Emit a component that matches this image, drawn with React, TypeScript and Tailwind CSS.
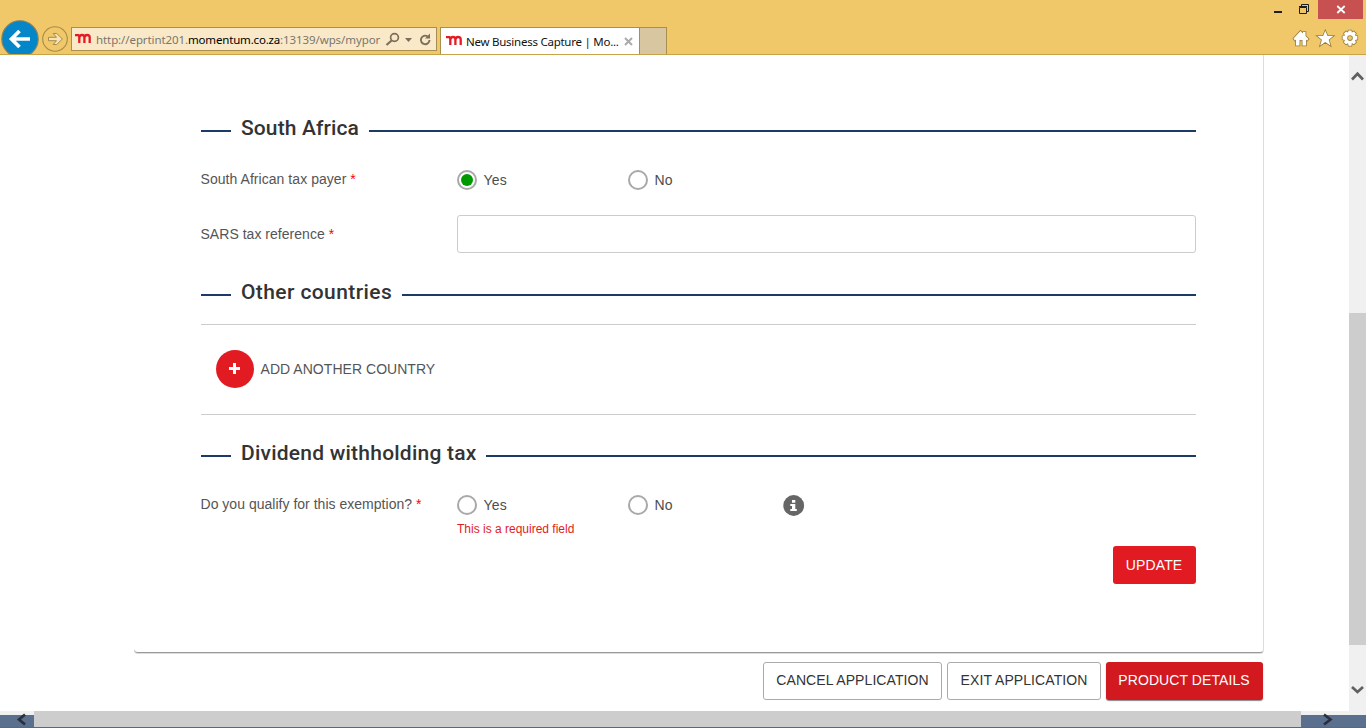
import React from "react";

function Favicon({ className }: { className: string }) {
  return (
    <svg className={className} width="17" height="12" viewBox="0 0 17 12" fill="none" stroke="#e31b23" strokeWidth="2.3">
      <path d="M0 2.2H3.4L4.300 3.400V10" />
      <path d="M4.300 4.200Q4.800 2 7 2Q9.400 2 9.400 4.500V10M9.400 4.500Q9.900 2 12 2Q14.700 2 14.700 4.500V10" />
    </svg>
  );
}

function Heading({ title, box }: { title: string; box: string }) {
  return (
    <div className="flex h-[30px] items-center">
      <div className="h-[2px] w-[30px] shrink-0 bg-[#1b3a66]" />
      <h2 className={`relative -top-[3px] shrink-0 whitespace-nowrap pl-[10px] font-['Roboto','Liberation_Sans',sans-serif] text-[21px] leading-[30px] font-medium text-[#333] ${box}`}>
        {title}
      </h2>
      <div className="h-[2px] grow bg-[#1b3a66]" />
    </div>
  );
}

function Radio({ label, checked, box }: { label: string; checked?: boolean; box: string }) {
  return (
    <div className={`flex items-center ${box}`}>
      <div className="flex size-[20px] shrink-0 items-center justify-center rounded-full border-2 border-[#a9a9a9] bg-white">
        {checked && <div className="size-[12px] rounded-full bg-[#090]" />}
      </div>
      <span className="pl-[6.500px] text-[14px] leading-[20px] tracking-[0.2px] text-[#4d4d4d]">{label}</span>
    </div>
  );
}

function Label({ text, box }: { text: string; box: string }) {
  return (
    <div className={`w-[256px] shrink-0 whitespace-nowrap text-[14px] leading-[20px] text-[#555] ${box}`}>
      {text} <span className="text-[#f00]">*</span>
    </div>
  );
}

function BrowserBar() {
  return (
    <header className="flex h-[55px] shrink-0 flex-col border-b border-[#c9a349] bg-[#f0c869] font-['Noto_Sans','Open_Sans',sans-serif]">
      <div className="flex h-[19px] justify-end">
        <svg width="48" height="19" viewBox="0 0 48 19" fill="none" stroke="#1e1e1e">
          <path d="M4 12H12" strokeWidth="2" />
          <path d="M29.500 7.500H36.500V13.500H29.500ZM29 6.500H37M31.500 6V4.500H38.500V11.500H37" />
        </svg>
        <div className="flex h-[19px] w-[45px] items-center justify-center bg-[#c75050]">
          <svg width="10" height="9" viewBox="0 0 10 9" fill="none" stroke="#fff" strokeWidth="1.800">
            <path d="M1.300 1L8.700 8M8.700 1L1.300 8" />
          </svg>
        </div>
        <div className="w-[3px]" />
      </div>
      <div className="flex h-[35px]">
        <svg className="shrink-0" width="71" height="35" viewBox="0 0 71 35" fill="none">
          <circle cx="20" cy="20" r="18.200" fill="#0586c8" stroke="#8a8058" strokeWidth="1.100" />
          <path d="M30 20H12.500M19.500 12L11.500 20L19.500 28" stroke="#fff" strokeWidth="3.700" />
          <circle cx="55" cy="20" r="12.300" stroke="#a58b4b" strokeWidth="1.100" />
          <path d="M48.500 18.300H56.500L53.200 14.500H56.800L62.300 20L56.800 25.500H53.200L56.500 21.700H48.500Z" fill="#f8e4b3" stroke="#a58b4b" />
        </svg>
        <div className="mt-[8px] flex h-[24px] w-[366px] shrink-0 border border-[#a78f50] bg-[#f9e9c8]">
          <Favicon className="mt-[5px] ml-[3px] shrink-0" />
          <div className="ml-[4px] w-[287px] whitespace-nowrap text-[11.500px] leading-[24px] tracking-[-0.09px] text-[#7b766c]">
            http://eprtint201.<span className="tracking-[-0.18px] text-black">momentum.co.za</span>:13139/wps/mypor
          </div>
          <svg className="ml-[1px] shrink-0" width="50" height="22" viewBox="0 0 50 22" fill="none" stroke="#7b6f59">
            <circle cx="10.500" cy="9.500" r="3.900" strokeWidth="1.700" />
            <path d="M7.600 12.500L2.500 17" strokeWidth="2.200" />
            <path d="M21 10H28L24.500 14Z" fill="#7b6f59" stroke="none" />
            <path d="M43.500 8.300A4.300 4.300 0 1 0 45.500 12" strokeWidth="1.900" />
            <path d="M46 5.500V10.500H41Z" fill="#7b6f59" stroke="none" />
          </svg>
        </div>
        <div className="mt-[8px] ml-[3px] flex h-[27px] w-[200px] shrink-0 border-x border-t border-[#a78f50] bg-white">
          <Favicon className="mt-[7px] ml-[5px] shrink-0" />
          <div className="ml-[3px] w-[156px] whitespace-nowrap text-[11.500px] leading-[27px] tracking-[-0.25px] text-[#111]">New Business Capture | Mo...</div>
          <svg className="mt-[9px] ml-[2px] shrink-0" width="9" height="9" viewBox="0 0 9 9" stroke="#aaa" strokeWidth="2">
            <path d="M1 1L8 8M8 1L1 8" />
          </svg>
        </div>
        <div className="mt-[8px] h-[27px] w-[27px] shrink-0 border-t border-r border-[#a78f50] bg-[#d7c6a0]" />
        <div className="grow" />
        <svg className="shrink-0" width="74" height="35" viewBox="0 0 74 35" fill="#fff" stroke="#9a7d3c" strokeWidth="1.600" paintOrder="stroke">
          <path d="M1.500 19.500L8.500 12L11 14.500V13H13.500V17L16.500 20L15 21.500L14 20.500V26.500H10.500V21H7.500V26.500H4V20.500L3 21.500Z" />
          <path d="M33.300 11.800L35.500 17.100H41.200L36.700 20.700L38.400 26.500L33.300 23L28.200 26.500L29.900 20.700L25.400 17.100H31.100Z" />
          <path fillRule="evenodd" d="M56.600 11.500H59.400L59.900 13.500L61.800 12.500L63.800 14.400L62.800 16.400L65.300 17.100V20.500L62.900 21L63.900 23.200L61.800 25.200L59.900 24.100L59.400 26.700H56.600L56 24.200L54 25.300L51.900 23.200L53 21.100L50.600 20.400V17.300L53 16.600L52 14.500L54 12.500L56 13.500ZM58 16.300A2.800 2.800 0 1 0 58 21.900A2.800 2.800 0 1 0 58 16.300Z" />
        </svg>
      </div>
    </header>
  );
}

export default function App() {
  return (
    <div className="flex h-[728px] w-[1366px] flex-col overflow-hidden bg-white font-['Liberation_Sans',Arial,sans-serif]">
      <BrowserBar />
      <div className="flex h-[656px] shrink-0">
        <main className="w-[1349px] shrink-0">
          <div className="ml-[134px] h-[598px] w-[1130px] rounded-b-[4px] border-r border-b border-r-[#dcdcdc] border-b-[#999] pr-[67px] pl-[67px] shadow-[0_1px_0_#ddd]">
            <section className="pt-[61px]">
              <Heading title="South Africa" box="w-[138px] tracking-[0.12px]" />
              <div className="mt-[24px] flex h-[20px]">
                <Label text="South African tax payer" box="-mt-px -ml-[0.500px] mr-[0.500px] tracking-[0.050px]" />
                <Radio label="Yes" checked box="w-[171px]" />
                <Radio label="No" box="" />
              </div>
              <div className="mt-[25px] flex h-[38px]">
                <Label text="SARS tax reference" box="-ml-[0.500px] mr-[0.500px] pt-[9px] tracking-[0.030px]" />
                <input aria-label="SARS tax reference" className="h-[38px] grow rounded-[3px] border border-[#ccc] bg-white" />
              </div>
            </section>
            <section className="pt-[27px]">
              <Heading title="Other countries" box="w-[171px] tracking-[0.400px]" />
              <div className="mt-[14px] flex h-[91px] items-center border-y border-[#ccc] pb-[2px] pl-[15px]">
                <button className="flex size-[38px] items-center justify-center rounded-full bg-[#e21b23]">
                  <svg className="mr-[1px]" width="11" height="11" viewBox="0 0 11 11" stroke="#fff" strokeWidth="3">
                    <path d="M0 5.500H11M5.500 0V11" />
                  </svg>
                </button>
                <span className="pl-[6.500px] text-[14px] leading-[20px] tracking-[0.040px] text-[#555]">ADD ANOTHER COUNTRY</span>
              </div>
            </section>
            <section className="pt-[26px]">
              <Heading title="Dividend withholding tax" box="w-[255px] tracking-[0.230px]" />
              <div className="mt-[24px] flex h-[20px]">
                <Label text="Do you qualify for this exemption?" box="-mt-px -ml-[0.500px] mr-[0.500px] tracking-[0.020px]" />
                <Radio label="Yes" box="w-[171px]" />
                <Radio label="No" box="w-[155px]" />
                <svg width="22" height="22" viewBox="0 0 22 22">
                  <circle cx="10.700" cy="10.500" r="10.400" fill="#666" />
                  <path d="M9 5H12.300V7.800H9ZM7.300 9H12.300V14H13.800V16H7.300V14H9V11H7.300Z" fill="#fff" />
                </svg>
              </div>
              <p className="mt-[6px] pl-[256px] text-[12px] leading-[16px] text-[#e21b23]">This is a required field</p>
              <div className="mt-[9px] flex justify-end">
                <button className="h-[38px] w-[83px] rounded-[3px] bg-[#e21b23] pr-[1px] text-[14px] tracking-[0.150px] text-white">UPDATE</button>
              </div>
            </section>
          </div>
          <div className="mt-[9px] flex h-[38px] w-[1263px] justify-end gap-[5px] text-[14px] tracking-[0.080px] text-[#333]">
            <button className="w-[179px] rounded-[3px] border border-[#aaa] pb-[2px] whitespace-nowrap">CANCEL APPLICATION</button>
            <button className="w-[154px] rounded-[3px] border border-[#aaa] pb-[2px] whitespace-nowrap">EXIT APPLICATION</button>
            <button className="w-[157px] rounded-[3px] bg-[#d1191f] pr-[1px] pb-[2px] whitespace-nowrap text-white shadow-[0_1px_1px_#888]">PRODUCT DETAILS</button>
          </div>
        </main>
        <aside className="flex w-[17px] shrink-0 flex-col bg-[#f0f0f0]">
          <svg width="17" height="258" viewBox="0 0 17 258" fill="none" stroke="#606060" strokeWidth="2.700">
            <path d="M3 24.500L8.500 18.800L14 24.500" />
          </svg>
          <div className="h-[332px] shrink-0 bg-[#cdcdcd]" />
          <svg width="17" height="66" viewBox="0 0 17 66" fill="none" stroke="#606060" strokeWidth="2.700">
            <path d="M3 42L8.500 47L14 42" />
          </svg>
        </aside>
      </div>
      <footer className="flex h-[17px] shrink-0 border-b border-[#59687b] bg-[linear-gradient(#f0f0f0_4px,#5b6f8e_4px)]">
        <svg className="shrink-0" width="34" height="16" viewBox="0 0 34 16" fill="none" stroke="#29303d" strokeWidth="2.700">
          <path d="M25 3.500L19 8.500L25 13.500" />
        </svg>
        <div className="w-[1267px] shrink-0 bg-[#cdcdcd]" />
        <svg className="shrink-0" width="65" height="16" viewBox="0 0 65 16" fill="none" stroke="#29303d" strokeWidth="2.700">
          <path d="M23 3.500L29.500 8.500L23 13.500" />
        </svg>
      </footer>
    </div>
  );
}
